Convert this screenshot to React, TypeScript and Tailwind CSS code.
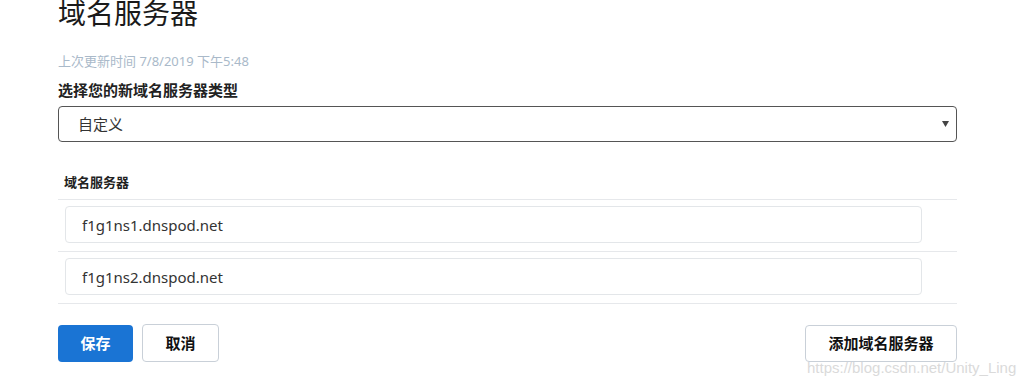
import { useState } from "react";

const font = "font-['Noto_Sans','Noto_Sans_CJK_SC',sans-serif]";

export default function App() {
  const [servers, setServers] = useState(["f1g1ns1.dnspod.net", "f1g1ns2.dnspod.net"]);
  const [kind, setKind] = useState("custom");

  return (
    <div className={`relative w-[1024px] h-[386px] overflow-hidden bg-white text-[#222] ${font}`}>
      <div className="w-[899px] ml-[58px]">
        <h1 className="text-[28px] leading-[28px] -mt-[1px] text-[#1a1a1a]">域名服务器</h1>

        <p className="mt-[26px] text-[13px] leading-[16px] text-[#a9b9c9]">
          上次更新时间 7/8/2019 下午5:48
        </p>

        <label className="block mt-[12px] text-[15px] leading-[18px] font-bold text-[#222]">
          选择您的新域名服务器类型
        </label>

        <div className="relative mt-[7px]">
          <select
            value={kind}
            onChange={(e) => setKind(e.target.value)}
            className="w-full h-[36px] appearance-none rounded-[4px] border border-[#555] bg-white pl-[19px] pr-8 text-[15px] text-[#333] outline-none"
          >
            <option value="custom">自定义</option>
            <option value="default">默认</option>
          </select>
          <svg
            className="pointer-events-none absolute right-[8px] top-[15px]"
            width="7"
            height="6"
            viewBox="0 0 7 6"
          >
            <path d="M0 0h7L3.5 6z" fill="#444" />
          </svg>
        </div>

        <div className="mt-[32px]">
          <div className="pl-[6px] pb-[9px] text-[13px] leading-[16px] font-bold text-[#222]">
            域名服务器
          </div>
          {servers.map((s, i) => (
            <div key={i} className="border-t border-[#e6e8eb] pt-[6px] pb-[8px] pl-[7px] pr-[35px]">
              <input
                value={s}
                onChange={(e) => {
                  const next = [...servers];
                  next[i] = e.target.value;
                  setServers(next);
                }}
                className="w-full h-[37px] rounded-[4px] border border-[#e3e6e9] bg-white px-[16px] text-[15px] text-[#333] outline-none"
              />
            </div>
          ))}
          <div className="border-t border-[#e6e8eb]" />
        </div>

        <div className="mt-[20px] flex items-center">
          <button className="w-[75px] h-[37px] rounded-[4px] bg-[#1a74d4] text-[15px] font-bold text-white">
            保存
          </button>
          <button className="ml-[9px] w-[77px] h-[38px] rounded-[4px] border border-[#c9d0d8] bg-white text-[15px] font-bold text-[#111]">
            取消
          </button>
          <button
            onClick={() => setServers([...servers, ""])}
            className="ml-auto w-[152px] h-[37px] rounded-[4px] border border-[#c9d0d8] bg-white text-[15px] font-bold text-[#111]"
          >
            添加域名服务器
          </button>
        </div>
      </div>

      <span className="pointer-events-none absolute left-[807px] top-[359px] font-['Liberation_Sans',Arial,sans-serif] text-[15px] leading-[18px] text-[#dadada]">
        https://blog.csdn.net/Unity_Ling
      </span>
    </div>
  );
}
